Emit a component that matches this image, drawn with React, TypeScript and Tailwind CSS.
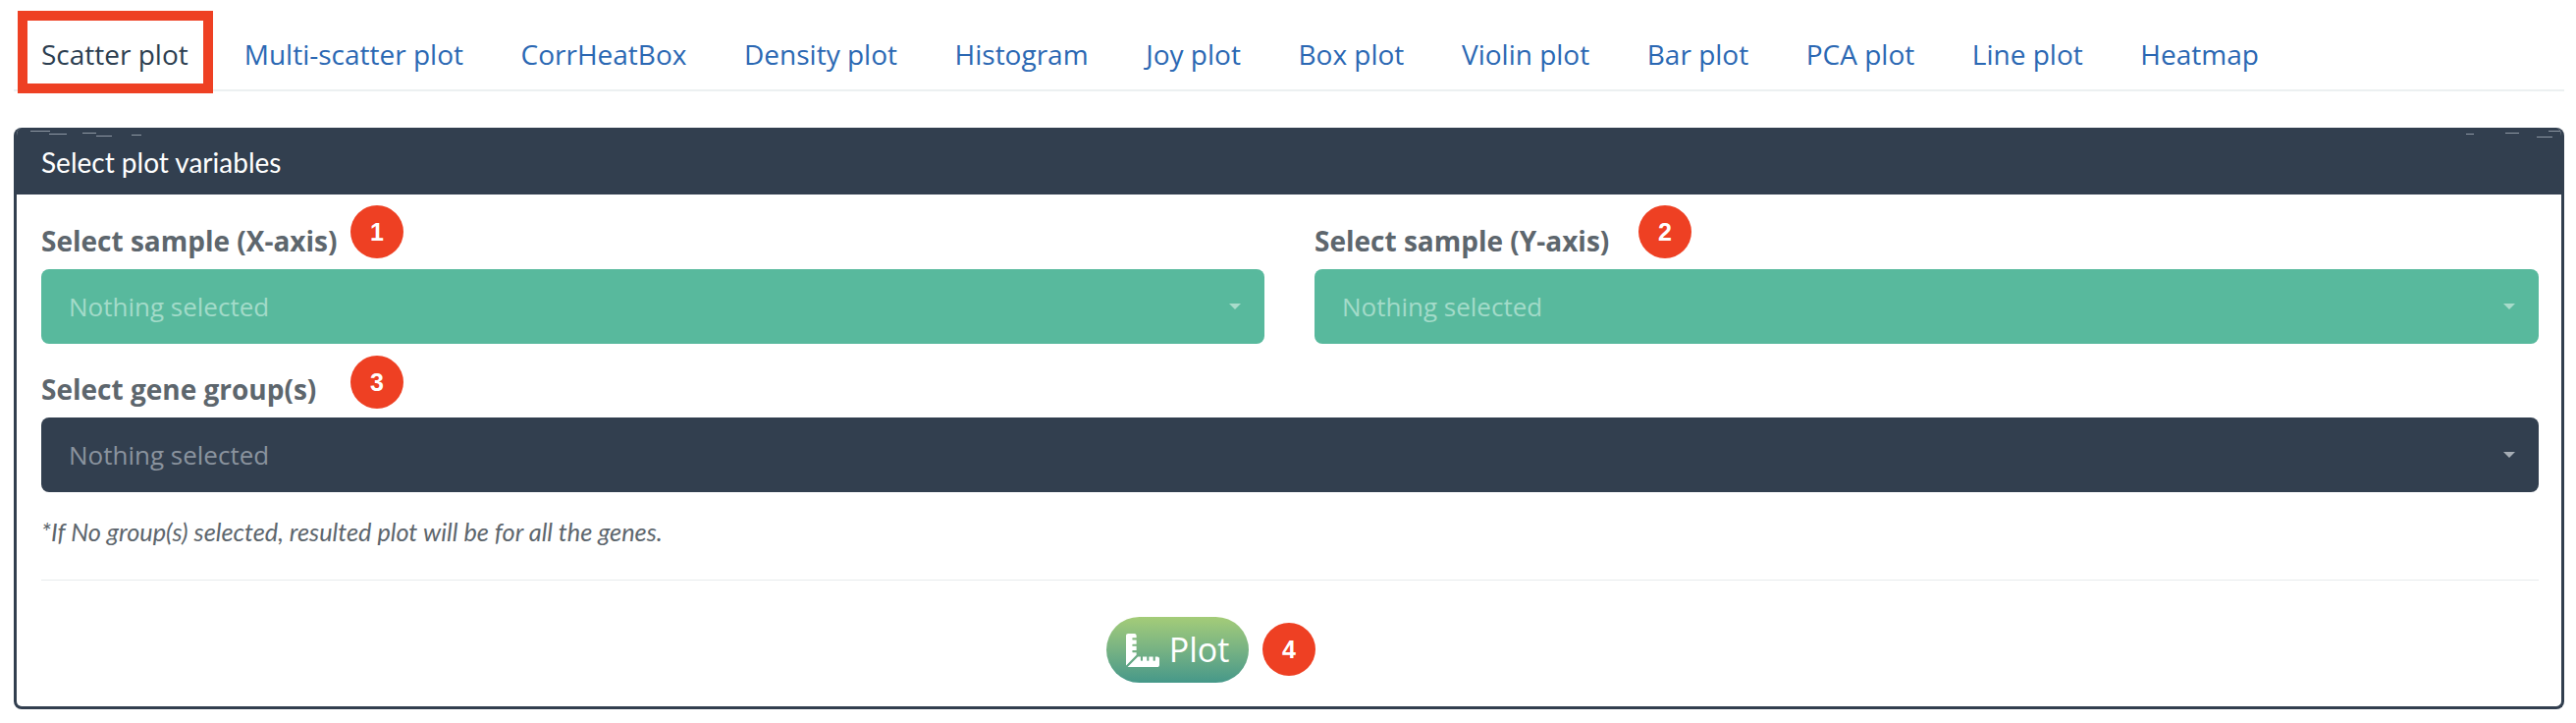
import { FaRulerCombined } from "react-icons/fa"

const tabs = [
  "Multi-scatter plot",
  "CorrHeatBox",
  "Density plot",
  "Histogram",
  "Joy plot",
  "Box plot",
  "Violin plot",
  "Bar plot",
  "PCA plot",
  "Line plot",
  "Heatmap",
]

function Badge({ n, className }: { n: number; className: string }) {
  return (
    <span
      className={`absolute flex h-[54px] w-[54px] items-center justify-center rounded-full bg-[#ee4023] font-['Liberation_Sans',sans-serif] text-[25px] font-bold leading-none text-white ${className}`}
    >
      {n}
    </span>
  )
}

function Select({ dark }: { dark?: boolean }) {
  return (
    <div
      className={`flex h-[76px] items-center justify-between rounded-[8px] pl-[28px] pr-[24px] text-[26px] ${
        dark ? "bg-[#323f4f] text-[#8a939e]" : "bg-[#58b99d] text-[#a3dbc9]"
      }`}
    >
      <span>Nothing selected</span>
      <span
        className={`h-0 w-0 border-x-[6px] border-t-[6px] border-x-transparent ${
          dark ? "border-t-[#a6adb5]" : "border-t-[#a8dccb]"
        }`}
      />
    </div>
  )
}

export default function App() {
  return (
    <div className="relative h-[736px] w-[2624px] overflow-hidden bg-white font-['Open_Sans',sans-serif]">
      {/* Tabs */}
      <div className="ml-[14px] mr-[12px] flex h-[93px] items-stretch border-b-2 border-[#ecf0f1] pl-[28px] pt-[24px] text-[28px] leading-[62px]">
        <div className="mr-[57px] text-[#2c3e50]">Scatter plot</div>
        {tabs.map((tab) => (
          <div key={tab} className="mr-[58.6px] whitespace-nowrap text-[#2b68b3]">
            {tab}
          </div>
        ))}
      </div>

      {/* Red highlight round the active tab */}
      <div className="absolute left-[18px] top-[11px] h-[84px] w-[199px] border-[10px] border-[#ee4023]" />

      {/* Card */}
      <div className="mx-[14px] mt-[37px] h-[592px] w-[2598px] overflow-hidden rounded-[8px] border-x-[3px] border-b-[3px] border-[#323f4f]">
        <div className="relative -mx-[3px] flex h-[68px] items-center bg-[#323f4f] pl-[28px] pt-[2px] font-['Lato',sans-serif] text-[28px] text-white">
          Select plot variables
          <svg className="absolute left-0 top-0" width="140" height="12" stroke="#8d97a3" strokeWidth="1">
            <path d="M17 3.5h20M36 6.5h18M70 5.5h14M84 8.5h16M120 7.5h10" />
          </svg>
          <svg className="absolute right-0 top-0" width="140" height="12" stroke="#8d97a3" strokeWidth="1">
            <path d="M124 3.5h14M80 5.5h14M40 6.5h8M112 9.5h16M62 12.5h20" />
          </svg>
        </div>

        <div className="pl-[25px] pr-[23px] text-[#5d666d]">
          <div className="grid grid-cols-[1246px_1247px] gap-x-[51px]">
            <div className="relative">
              <div className="flex h-[76px] items-end pb-[8px] text-[28px] font-bold">Select sample (X-axis)</div>
              <Badge n={1} className="left-[315px] top-[11px]" />
              <Select />
            </div>
            <div className="relative">
              <div className="flex h-[76px] items-end pb-[8px] text-[28px] font-bold">Select sample (Y-axis)</div>
              <Badge n={2} className="left-[330px] top-[11px]" />
              <Select />
            </div>
          </div>

          <div className="relative">
            <div className="flex h-[75px] items-end pb-[8px] text-[28px] font-bold">Select gene group(s)</div>
            <Badge n={3} className="left-[315px] top-[12px]" />
            <Select dark />
          </div>

          <p className="mt-[25px] font-['Lato',sans-serif] text-[25.3px] italic leading-[30px]">
            *If No group(s) selected, resulted plot will be for all the genes.
          </p>

          <div className="mt-[34px] border-t border-[#e8ebed]" />

          <div className="relative mt-[37px] flex justify-start pl-[1085px]">
            <button className="flex h-[67px] w-[145px] items-center justify-center gap-[10px] rounded-full bg-gradient-to-b from-[#a4cc78] to-[#459889] text-[34px] text-white">
              <FaRulerCombined className="h-[34px] w-[34px]" />
              Plot
            </button>
            <Badge n={4} className="left-[1244px] top-[6px]" />
          </div>
        </div>
      </div>
    </div>
  )
}
